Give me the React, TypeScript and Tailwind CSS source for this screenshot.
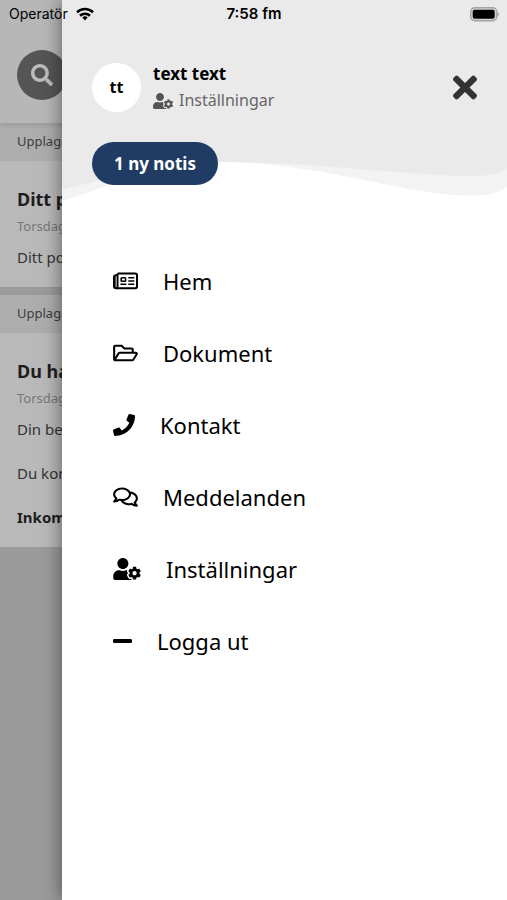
import {
  FaMinus,
  FaPhone,
  FaRegComments,
  FaRegFolderOpen,
  FaSearch,
  FaTimes,
  FaUserCog,
} from 'react-icons/fa'

const NewspaperIcon = ({ className }: { className?: string }) => (
  <svg viewBox="0 0 25 22" className={className} fill="none" stroke="currentColor" strokeWidth="2">
    <path d="M4.6 3.6H22.4Q24 3.6 24 5.2V16.6Q24 18.3 22.4 18.3H3.2Q1 18.3 1 16V7Q1 5 4.6 5" />
    <path d="M4.6 3.6V16.2Q4.6 18.3 3 18.3" strokeWidth="1.8" />
    <path d="M2.6 6V17" strokeWidth="1.4" stroke="#555555" />
    <rect x="8.2" y="7.7" width="4.4" height="3.5" rx="0.8" strokeWidth="1.6" />
    <path d="M7.4 14.2H13.4M15.3 7.8H21.3M15.3 11H21.3M15.3 14.2H21.3" strokeWidth="1.6" />
  </svg>
)

interface MenuItem {
  label: string
  icon: React.ComponentType<{ className?: string }>
  iconWidth: string
}

// The glyphs differ in width, the labels follow right after them
const menuItems: MenuItem[] = [
  { label: 'Hem', icon: NewspaperIcon, iconWidth: 'w-[25px]' },
  { label: 'Dokument', icon: FaRegFolderOpen, iconWidth: 'w-[25px]' },
  { label: 'Kontakt', icon: FaPhone, iconWidth: 'w-[22px]' },
  { label: 'Meddelanden', icon: FaRegComments, iconWidth: 'w-[25px]' },
  { label: 'Inställningar', icon: FaUserCog, iconWidth: 'w-[28px]' },
  { label: 'Logga ut', icon: FaMinus, iconWidth: 'w-[19px]' },
]

const StatusBar = () => (
  <div className="absolute inset-x-0 top-0 z-20 grid h-7 grid-cols-3 items-center pl-[9px] pr-2 font-['Inter',sans-serif] text-sm text-black">
    <div className="flex items-center gap-2">
      <span>Operatör</span>
      <svg viewBox="0 0 18 14" className="h-3.5 w-[18px]" fill="none" stroke="currentColor" strokeWidth="2.6">
        <path d="M1 5.2a11.5 11.5 0 0 1 16 0" />
        <path d="M4 8.7a7.2 7.2 0 0 1 10 0" />
        <path d="M9 13.5l-2.7-2.9a3.9 3.9 0 0 1 5.4 0z" fill="currentColor" stroke="none" />
      </svg>
    </div>
    <span className="text-center text-[15px] font-semibold">7:58 fm</span>
    <svg viewBox="0 0 31 15" className="h-[15px] w-[31px] justify-self-end">
      <rect x="2.7" y="0.7" width="26" height="13" rx="4" fill="#d4d4d4" stroke="#a3a3a3" strokeWidth="1.4" />
      <rect x="4.7" y="2.7" width="22" height="9" rx="2" fill="#000" />
      <path d="M29.4 5.2q1.6.6 1.6 2t-1.6 2z" fill="#a3a3a3" />
    </svg>
  </div>
)

interface PostProps {
  title: string
  date: string
  children: React.ReactNode
}

const Post = ({ title, date, children }: PostProps) => (
  <article className="whitespace-nowrap">
    <p className="flex h-[38px] items-center bg-[#adadad] pl-[17px] text-[13px] text-[#3c3c3c]">Upplagd</p>
    <div className="flex flex-col pl-[17px] pt-6">
      <h2 className="text-lg leading-7 font-bold text-[#1d1d1d]">{title}</h2>
      <p className="text-[13px] leading-[26px] text-[#777777]">{date}</p>
      {children}
    </div>
  </article>
)

// News feed that stays dimmed behind the drawer
const Feed = () => (
  <main className="min-h-screen bg-[#9b9b9b]">
    <header className="relative flex h-[123px] items-start bg-[#b7b7b7] pl-[17px] pt-[50px] shadow-[0_1px_6px_rgba(0,0,0,0.15)]">
      <button aria-label="Sök" className="flex size-[50px] items-center justify-center rounded-full bg-[#555555]">
        <FaSearch className="size-[22px] text-[#bcbcbc]" />
      </button>
    </header>
    <div className="flex flex-col gap-2 bg-[#9b9b9b] text-[15px] text-[#333333]">
      <div className="bg-[#b9b9b9] pb-3">
        <Post title="Ditt post" date="Torsdag">
          <p className="leading-9">Ditt post</p>
        </Post>
      </div>
      <div className="bg-[#b9b9b9] pb-3">
        <Post title="Du har" date="Torsdag">
          <p className="leading-9">Din bes</p>
          <p className="pt-2 leading-9">Du kom</p>
          <p className="pt-2 leading-9 font-bold text-[#1d1d1d]">Inkomst</p>
        </Post>
      </div>
    </div>
  </main>
)

const DrawerHeader = () => (
  <header>
    <div className="h-[160px] bg-[#eaeaea] px-[30px] pt-[60px]">
      <div className="flex items-center">
        <div className="flex size-[49px] items-center justify-center rounded-full bg-white text-base font-bold">tt</div>
        <div className="ml-3 flex flex-col">
          <p className="text-[17px] leading-[27px] font-bold">text text</p>
          <a href="#installningar" className="flex items-center gap-1.5 text-base leading-[27px] text-[#666666]">
            <FaUserCog className="h-4 w-5 text-[#555555]" />
            Inställningar
          </a>
        </div>
        <button aria-label="Stäng" className="ml-auto">
          <FaTimes className="h-[35px] w-6 text-[#333333]" />
        </button>
      </div>
      <button className="relative mt-7 h-[43px] rounded-full bg-[#203c64] px-[22px] text-[17px] font-bold text-white">
        1 ny notis
      </button>
    </div>
    <svg viewBox="0 0 445 40" preserveAspectRatio="none" className="block h-10 w-full">
      <path d="M0 0H445V27C430 37 415 36 395 35C330 31 250 2 160 2C90 2 50 27 0 41Z" fill="#f3f3f3" />
      <path d="M0 0H445V8C434 16 425 16 400 16C330 14 250 2 160 2C90 2 50 18 0 30Z" fill="#eaeaea" />
    </svg>
  </header>
)

const Drawer = () => (
  <aside className="absolute inset-y-0 right-0 left-[62px] z-10 bg-white text-black shadow-[0_0_18px_rgba(0,0,0,0.5)]">
    <DrawerHeader />
    <nav className="pl-[51px] pt-[45px]">
      <ul>
        {menuItems.map(({ label, icon: Icon, iconWidth }) => (
          <li key={label}>
            <a href="#meny" className="flex h-[72px] items-center gap-[25px] text-[22px]">
              <Icon className={`h-[22px] ${iconWidth}`} />
              {label}
            </a>
          </li>
        ))}
      </ul>
    </nav>
  </aside>
)

export default function App() {
  return (
    <div className="relative min-h-screen overflow-hidden font-['Noto_Sans',sans-serif]">
      <Feed />
      <Drawer />
      <StatusBar />
    </div>
  )
}
